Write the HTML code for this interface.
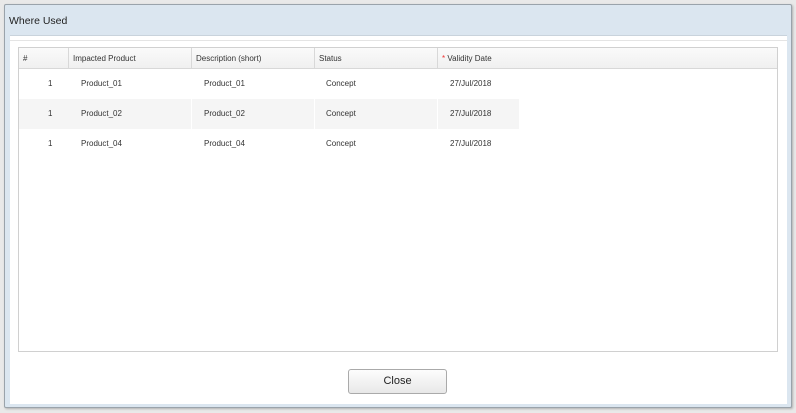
<!DOCTYPE html>
<html><head><style>
*{margin:0;padding:0;box-sizing:border-box}
body{width:796px;height:413px;background:#e9e9e9;font-family:"Liberation Sans",sans-serif;position:relative;overflow:hidden}
.dlg{position:absolute;left:4px;top:4px;width:788px;height:404px;background:#dbe6f0;border:1px solid #9aa3ab;border-radius:2px;box-shadow:1px 1px 2px rgba(0,0,0,.25)}
.title{position:absolute;left:4px;top:10px;font-size:10.5px;color:#222}
.panel{position:absolute;left:5px;top:30px;width:777px;height:369px;background:#fff;border-top:1px solid #c9d3dc}
.panel:before{content:"";position:absolute;left:0;right:0;top:4px;border-top:1px solid #e4e4e4}
.grid{position:absolute;left:13px;top:42px;width:760px;height:305px;border:1px solid #d0d0d0;background:#fff}
.hdr{position:absolute;left:0;top:0;width:100%;height:21px;background:linear-gradient(#fafafa,#f0f0f0);border-bottom:1px solid #d8d8d8}
.c{position:absolute;top:0;height:100%;font-size:8px;color:#333;line-height:21px;padding-left:4px;border-right:1px solid #d8d8d8}
.row{position:absolute;left:0;width:500px;height:30px;font-size:8px;color:#333;line-height:30px}
.row span{position:absolute}
.alt{background:#f5f5f5}
.btn{position:absolute;left:343px;top:364px;width:99px;height:25px;border:1px solid #aaa;border-radius:3px;background:linear-gradient(#fdfdfd,#e8e8e8);font-size:11px;text-align:center;line-height:23px;color:#222}
</style></head><body>
<div class="dlg">
<div class="title">Where Used</div>
<div class="panel"></div>
<div class="grid">
<div class="hdr">
<div class="c" style="left:0;width:50px">#</div>
<div class="c" style="left:50px;width:123px">Impacted Product</div>
<div class="c" style="left:173px;width:123px">Description (short)</div>
<div class="c" style="left:296px;width:123px">Status</div>
<div class="c" style="left:419px;width:82px;border-right:none"><span style="color:#e33">*</span> Validity Date</div>
</div>
<div class="row" style="top:21px"><span style="left:29px">1</span><span style="left:62px">Product_01</span><span style="left:185px">Product_01</span><span style="left:307px">Concept</span><span style="left:431px">27/Jul/2018</span></div>
<div class="row alt" style="top:51px"><span style="left:29px">1</span><span style="left:62px">Product_02</span><span style="left:185px">Product_02</span><span style="left:307px">Concept</span><span style="left:431px">27/Jul/2018</span><i style="position:absolute;left:172px;top:0;height:30px;border-left:1px solid #fff"></i><i style="position:absolute;left:295px;top:0;height:30px;border-left:1px solid #fff"></i><i style="position:absolute;left:418px;top:0;height:30px;border-left:1px solid #fff"></i></div>
<div class="row" style="top:81px"><span style="left:29px">1</span><span style="left:62px">Product_04</span><span style="left:185px">Product_04</span><span style="left:307px">Concept</span><span style="left:431px">27/Jul/2018</span></div>
</div>
<div class="btn">Close</div>
</div>
</body></html>
